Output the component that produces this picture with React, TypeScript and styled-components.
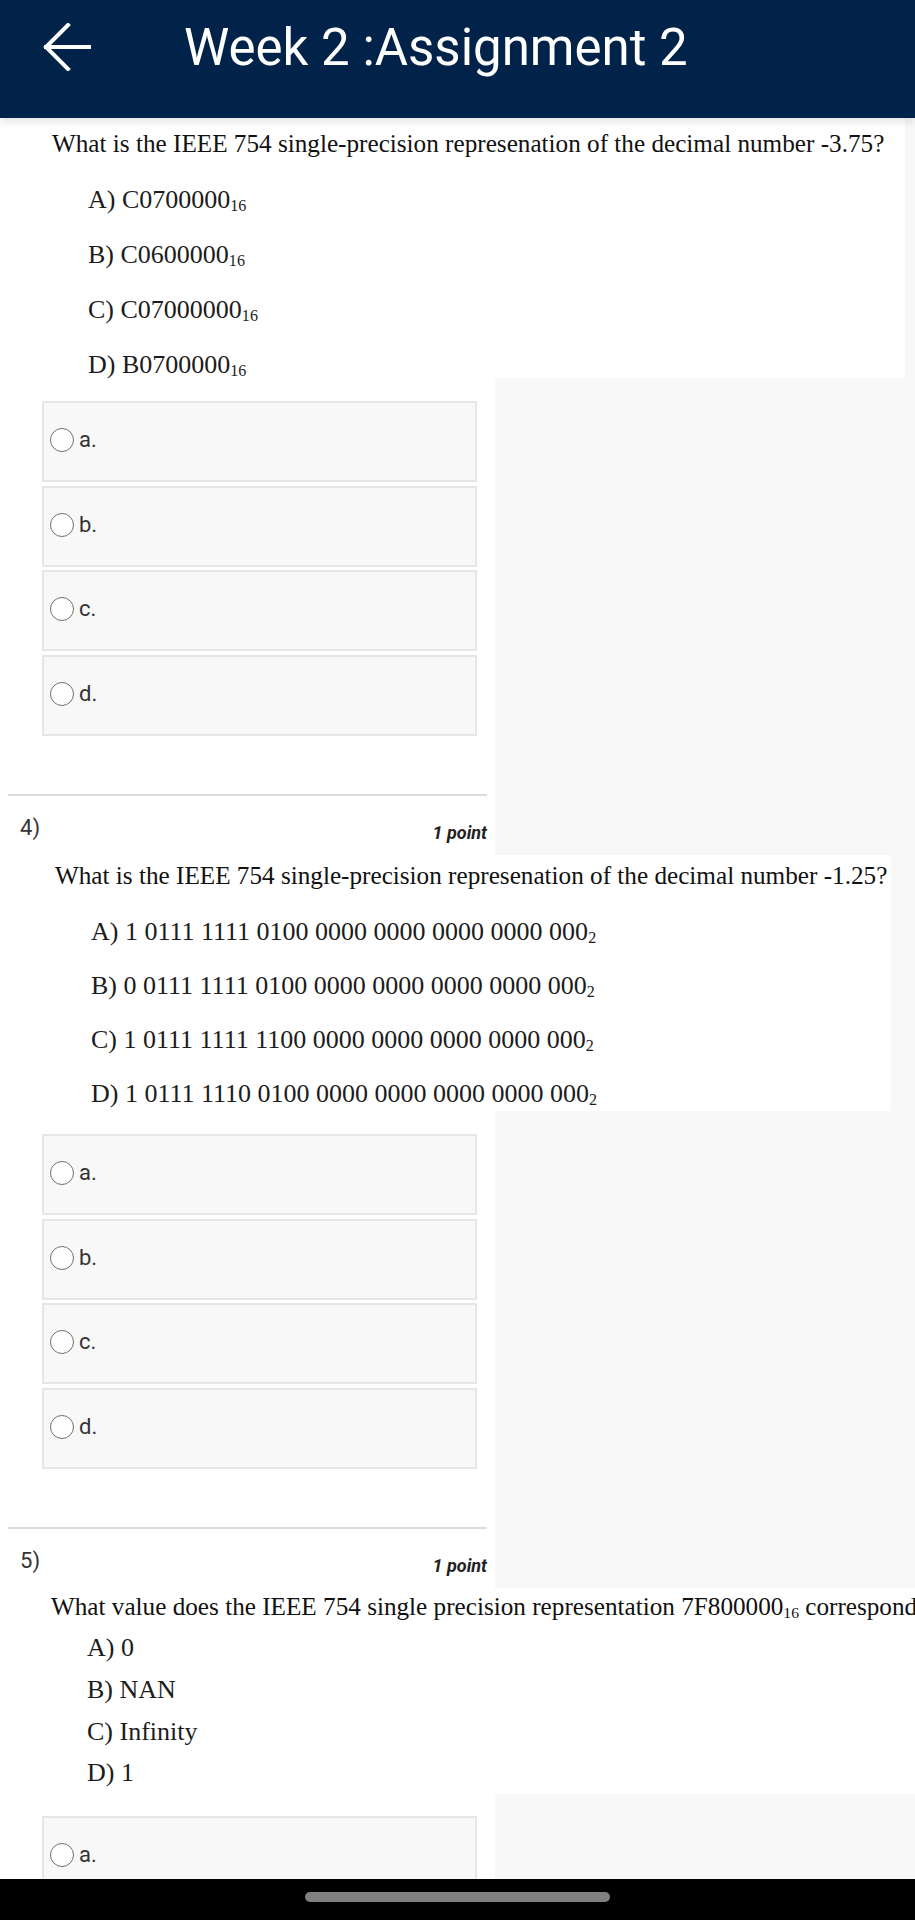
import React from 'react';
import styled, { createGlobalStyle } from 'styled-components';

const GlobalStyle = createGlobalStyle`
  html, body {
    margin: 0;
    padding: 0;
    background: #f8f8f8;
  }
  * {
    box-sizing: border-box;
  }
`;

const Page = styled.div`
  width: 915px;
  height: 1920px;
  display: flex;
  flex-direction: column;
  overflow: hidden;
  background: #f8f8f8;
`;

const Header = styled.header`
  position: relative;
  z-index: 1;
  flex-shrink: 0;
  height: 118px;
  background: #01234a;
  box-shadow: 0 3px 9px rgba(0, 0, 0, 0.13);
`;

const HeaderRow = styled.div`
  height: 94px;
  display: flex;
  align-items: center;
  padding-left: 43px;
`;

const BackIcon = styled.svg`
  width: 48px;
  height: 48px;
  flex-shrink: 0;
`;

const Title = styled.h1`
  margin: 0 0 0 93px;
  font-family: Roboto, 'Liberation Sans', sans-serif;
  font-weight: 400;
  font-size: 51px;
  line-height: 1;
  color: #fff;
  white-space: nowrap;
`;

const Body = styled.main`
  flex: 1;
  display: flex;
  overflow: hidden;
  background: #f8f8f8;
`;

const Column = styled.div`
  width: 495px;
  flex-shrink: 0;
  display: flex;
  flex-direction: column;
  padding: 0 8px;
  background: #fff;
`;

const QuestionImage = styled.div<{ $width: number; $height: number; $padTop: number; $padLeft: number }>`
  flex-shrink: 0;
  width: ${({ $width }) => $width}px;
  height: ${({ $height }) => $height}px;
  padding: ${({ $padTop, $padLeft }) => `${$padTop}px 0 0 ${$padLeft}px`};
  background: #fff;
  font-family: 'Liberation Serif', 'Times New Roman', serif;
  white-space: nowrap;
`;

const QuestionText = styled.p`
  margin: 0;
  font-size: 25.2px;
  line-height: 30px;
  color: #111;
`;

const Option = styled.p<{ $gap: number }>`
  margin: ${({ $gap }) => $gap}px 0 0 36px;
  font-size: 26px;
  line-height: 30px;
  color: #1c1c1c;
`;

const Sub = styled.sub`
  font-size: 0.62em;
  line-height: 0;
  vertical-align: -0.2em;
`;

const Choices = styled.div<{ $gap: number }>`
  display: flex;
  flex-direction: column;
  gap: 3.7px;
  margin: ${({ $gap }) => $gap}px 0 0 34px;
  width: 435px;
  flex-shrink: 0;
`;

const ChoiceBox = styled.label`
  height: 81px;
  display: flex;
  align-items: flex-start;
  padding: 25px 0 0 6px;
  border: 2px solid #e6e6e6;
  background: #f8f8f8;
  cursor: pointer;
`;

const Circle = styled.span`
  width: 24px;
  height: 24px;
  border-radius: 50%;
  border: 1.5px solid #6f6f6f;
  background: #fff;
  flex-shrink: 0;
`;

const ChoiceLabel = styled.span`
  margin-left: 5px;
  font-family: Roboto, 'Liberation Sans', sans-serif;
  font-size: 22px;
  line-height: 24px;
  color: #333;
`;

const Divider = styled.hr`
  margin: 58px 0 0;
  height: 2px;
  border: none;
  background: #dcdcdc;
  flex-shrink: 0;
`;

const QuestionHead = styled.div`
  height: 59px;
  display: flex;
  justify-content: space-between;
  align-items: flex-start;
  flex-shrink: 0;
  font-family: Roboto, 'Liberation Sans', sans-serif;
`;

const QuestionNumber = styled.span`
  margin: 20px 0 0 12px;
  font-size: 22px;
  line-height: 24px;
  color: #333;
`;

const Points = styled.span`
  margin-top: 26px;
  font-size: 18px;
  line-height: 22px;
  font-weight: 700;
  font-style: italic;
  color: #222;
`;

const NavBar = styled.div`
  height: 41px;
  flex-shrink: 0;
  display: flex;
  justify-content: center;
  padding-top: 13px;
  background: #000;
`;

const HomePill = styled.div`
  width: 305px;
  height: 10px;
  border-radius: 5px;
  background: #808080;
`;

type Opt = { text: string; sub?: string };

type Question = {
  id: number;
  text: string;
  textSub?: string;
  textTail?: string;
  options: Opt[];
  width: number;
  height: number;
  padTop: number;
  padLeft: number;
  firstGap: number;
  optGap: number;
  choiceGap: number;
};

const QUESTIONS: Question[] = [
  {
    id: 3,
    text: 'What is the IEEE 754 single-precision represenation of the decimal number -3.75?',
    options: [
      { text: 'A)  C0700000', sub: '16' },
      { text: 'B)  C0600000', sub: '16' },
      { text: 'C)  C07000000', sub: '16' },
      { text: 'D)  B0700000', sub: '16' },
    ],
    width: 897,
    height: 260,
    padTop: 11,
    padLeft: 44,
    firstGap: 26,
    optGap: 25,
    choiceGap: 23,
  },
  {
    id: 4,
    text: 'What is the IEEE 754 single-precision represenation of the decimal number -1.25?',
    options: [
      { text: 'A)  1 0111 1111 0100 0000 0000 0000 0000 000', sub: '2' },
      { text: 'B)  0 0111 1111 0100 0000 0000 0000 0000 000', sub: '2' },
      { text: 'C)  1 0111 1111 1100 0000 0000 0000 0000 000', sub: '2' },
      { text: 'D)  1 0111 1110 0100 0000 0000 0000 0000 000', sub: '2' },
    ],
    width: 883,
    height: 256,
    padTop: 6,
    padLeft: 47,
    firstGap: 26,
    optGap: 24,
    choiceGap: 23,
  },
  {
    id: 5,
    text: 'What value does the IEEE 754 single precision representation 7F800000',
    textSub: '16',
    textTail: ' correspond to?',
    options: [{ text: 'A)  0' }, { text: 'B)  NAN' }, { text: 'C)  Infinity' }, { text: 'D)  1' }],
    width: 1000,
    height: 206,
    padTop: 4,
    padLeft: 43,
    firstGap: 11,
    optGap: 11.7,
    choiceGap: 22,
  },
];

const CHOICES = ['a.', 'b.', 'c.', 'd.'];

const Choice = ({ label }: { label: string }) => (
  <ChoiceBox>
    <Circle />
    <ChoiceLabel>{label}</ChoiceLabel>
  </ChoiceBox>
);

const QuestionBlock = ({ q, first }: { q: Question; first: boolean }) => (
  <>
    {!first && (
      <>
        <Divider />
        <QuestionHead>
          <QuestionNumber>{q.id})</QuestionNumber>
          <Points>1 point</Points>
        </QuestionHead>
      </>
    )}
    <QuestionImage $width={q.width} $height={q.height} $padTop={q.padTop} $padLeft={q.padLeft}>
      <QuestionText>
        {q.text}
        {q.textSub && <Sub>{q.textSub}</Sub>}
        {q.textTail}
      </QuestionText>
      {q.options.map((opt, i) => (
        <Option key={opt.text} $gap={i === 0 ? q.firstGap : q.optGap}>
          {opt.text}
          {opt.sub && <Sub>{opt.sub}</Sub>}
        </Option>
      ))}
    </QuestionImage>
    <Choices $gap={q.choiceGap}>
      {CHOICES.map((c) => (
        <Choice key={c} label={c} />
      ))}
    </Choices>
  </>
);

export default function App() {
  return (
    <>
      <GlobalStyle />
      <Page>
        <Header>
          <HeaderRow>
            <BackIcon viewBox="0 0 48 48" fill="none" stroke="#fff" strokeWidth="4" strokeLinecap="square">
              <path d="M3 24H46" />
              <path d="M25 2L3 24L25 46" />
            </BackIcon>
            <Title>Week 2 :Assignment 2</Title>
          </HeaderRow>
        </Header>
        <Body>
          <Column>
            {QUESTIONS.map((q, i) => (
              <QuestionBlock key={q.id} q={q} first={i === 0} />
            ))}
          </Column>
        </Body>
        <NavBar>
          <HomePill />
        </NavBar>
      </Page>
    </>
  );
}
